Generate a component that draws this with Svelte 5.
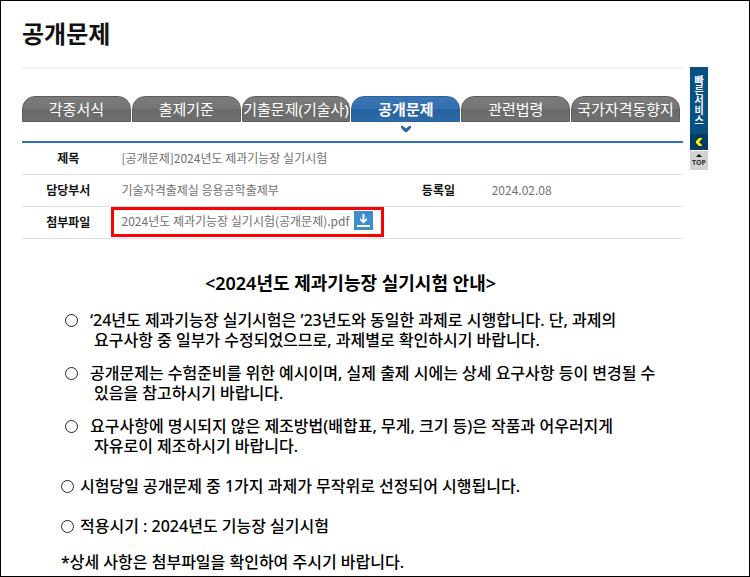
<script>
  const tabs = ['각종서식', '출제기준', '기출문제(기술사)', '공개문제', '관련법령', '국가자격동향지'];
  const current = '공개문제';
  const notices = [
    ['‘24년도 제과기능장 실기시험은 ’23년도와 동일한 과제로 시행합니다. 단, 과제의', '요구사항 중 일부가 수정되었으므로, 과제별로 확인하시기 바랍니다.'],
    ['공개문제는 수험준비를 위한 예시이며, 실제 출제 시에는 상세 요구사항 등이 변경될 수', '있음을 참고하시기 바랍니다.'],
    ['요구사항에 명시되지 않은 제조방법(배합표, 무게, 크기 등)은 작품과 어우러지게', '자유로이 제조하시기 바랍니다.']
  ];
  const extras = ['시험당일 공개문제 중 1가지 과제가 무작위로 선정되어 시행됩니다.', '적용시기 : 2024년도 기능장 실기시험'];
</script>

<div class="page">
  <main>
    <h1>공개문제</h1>
    <nav aria-label="자료실">
      {#each tabs as tab}
        <a href="#top" class:active={tab === current} aria-current={tab === current ? 'page' : undefined}>
          {tab}
          {#if tab === current}
            <svg class="caret" width="10" height="6" viewBox="0 0 10 6" aria-hidden="true"><path d="M0 0h2l3 2.500 3-2.500h2v2L6 6H4L0 2z" fill="#2a659c" /></svg>
          {/if}
        </a>
      {/each}
    </nav>

    <table>
      <colgroup><col class="label" /><col class="wide" /><col class="label" /><col /></colgroup>
      <tbody>
        <tr><th scope="row">제목</th><td colspan="3">[공개문제]2024년도 제과기능장 실기시험</td></tr>
        <tr><th scope="row">담당부서</th><td>기술자격출제실 응용공학출제부</td><th scope="row">등록일</th><td>2024.02.08</td></tr>
        <tr>
          <th scope="row">첨부파일</th>
          <td colspan="3" class="file">
            <a href="#file" class="attachment">
              <span>2024년도 제과기능장 실기시험(공개문제).pdf</span>
              <svg width="19" height="19" viewBox="0 0 19 19" aria-hidden="true">
                <rect width="19" height="19" fill="#3d8dce" />
                <path d="M8.5 3h2v6L13 7v2.200L9.500 12.500 6 9.200V7l2.500 2zM3 14h13v2H3z" fill="#fff" />
              </svg>
            </a>
          </td>
        </tr>
      </tbody>
    </table>

    <article>
      <h2>&lt;2024년도 제과기능장 실기시험 안내&gt;</h2>
      <ul class="notices">
        {#each notices as [first, second]}
          <li><i class="ring"></i><p>{first}<span>{second}</span></p></li>
        {/each}
      </ul>
      <ul class="extras">
        {#each extras as text}
          <li><i class="ring"></i><p>{text}</p></li>
        {/each}
      </ul>
      <p class="footnote">*상세 사항은 첨부파일을 확인하여 주시기 바랍니다.</p>
    </article>
  </main>

  <aside>
    <button class="quick" type="button">
      <span class="vertical">빠른서비스</span>
      <span class="arrow">
        <svg width="6" height="8" viewBox="0 0 6 8" aria-hidden="true"><path d="M3 0h3v1L3 4l3 3v1H3L0 5V3z" fill="#fff000" /></svg>
      </span>
    </button>
    <a class="to-top" href="#top">
      <svg width="6" height="3" viewBox="0 0 6 3" aria-hidden="true"><path d="M3 0l3 3H0z" fill="#111" /></svg>
      TOP
    </a>
  </aside>
</div>

<style>
  :global(body) { margin: 0; background: #fff; }
  .page {
    box-sizing: border-box;
    min-height: 100vh;
    display: flex;
    gap: 7px;
    padding: 0 41px 0 21px;
    border: 1px solid #000;
    color: #111;
    font-family: "Noto Sans", "Noto Sans CJK KR", sans-serif;
  }
  main { flex: 1; min-width: 0; }
  h1, h2, p, ul { margin: 0; padding: 0; }
  h1 {
    height: 66px;
    line-height: 66px;
    border-bottom: 2px solid #f3f3f3;
    font-size: 24px;
    font-weight: 600;
  }
  nav { display: flex; gap: 1px; margin: 27px 3px 19px 0; }
  nav a {
    position: relative;
    flex: 1 1 0;
    min-width: 0;
    box-sizing: border-box;
    height: 26px;
    border: 1px solid #5c5c5c;
    border-radius: 13px 13px 0 0;
    background: linear-gradient(#7c7c7c, #747474 50%, #6a6a6a 50%, #707070);
    color: #fff;
    font-size: 15px;
    line-height: 24px;
    text-decoration: none;
    white-space: nowrap;
    display: flex;
    justify-content: center;
  }
  nav a.active {
    border-color: #2764a0;
    background: linear-gradient(#3976b4, #336fae 50%, #24619d 50%, #2c6ba9);
    font-weight: 700;
  }
  .caret { position: absolute; top: 29px; left: calc(50% - 5px); }
  table {
    width: 100%;
    table-layout: fixed;
    border-collapse: collapse;
    border-top: 2px solid #2e75b5;
    font-family: "Noto Sans CJK KR", sans-serif;
    font-size: 12px;
    line-height: 18px;
  }
  col.label { width: 14%; }
  col.wide { width: 42%; }
  th, td { box-sizing: border-box; height: 32px; padding: 0; border-bottom: 1px solid #e2e2e2; }
  th { color: #111; font-weight: 700; text-align: center; }
  td { padding-left: 7px; color: #707070; text-align: left; }
  td.file { padding-left: 0; }
  .attachment {
    display: inline-flex;
    align-items: center;
    gap: 5px;
    box-sizing: border-box;
    height: 30px;
    margin-left: -4px;
    padding: 0 8px 3px;
    border: 3px solid #f00;
    color: inherit;
    text-decoration: none;
    vertical-align: top;
  }
  article { padding: 31px 0 4px 39px; font-size: 16px; line-height: 20px; font-weight: 500; color: #000; }
  h2 { margin: 0 43px 14px 0; text-align: center; font-size: 18px; line-height: 26px; font-weight: 600; }
  ul { list-style: none; }
  li { display: flex; white-space: nowrap; }
  li p span { display: block; padding-left: 4px; }
  .ring { flex: none; box-sizing: border-box; width: 13px; height: 13px; margin-top: 4px; border: 1px solid #222; border-radius: 50%; }
  .notices { display: grid; gap: 13px; }
  .notices li { gap: 12px; padding-left: 4px; }
  .extras { display: grid; gap: 20px; padding: 20px 0 16px; }
  .extras li { gap: 6px; }
  aside { flex: none; width: 18px; padding-top: 66px; }
  .quick { display: flex; flex-direction: column; width: 100%; padding: 0; border: 0; background: #075083; color: #fff; font: 600 10px/10px "Noto Sans CJK KR", sans-serif; }
  .vertical { width: 10px; height: 50px; margin: 8px auto 9px; overflow-wrap: anywhere; white-space: normal; }
  .arrow { display: flex; align-items: center; justify-content: center; width: 100%; height: 16px; background: #043c66; }
  .to-top { display: flex; flex-direction: column; align-items: center; justify-content: center; gap: 2px; height: 19px; margin-top: 1px; background: #d2d2d2; color: #333; font: 700 7px/8px "Open Sans", sans-serif; text-decoration: none; }
</style>
